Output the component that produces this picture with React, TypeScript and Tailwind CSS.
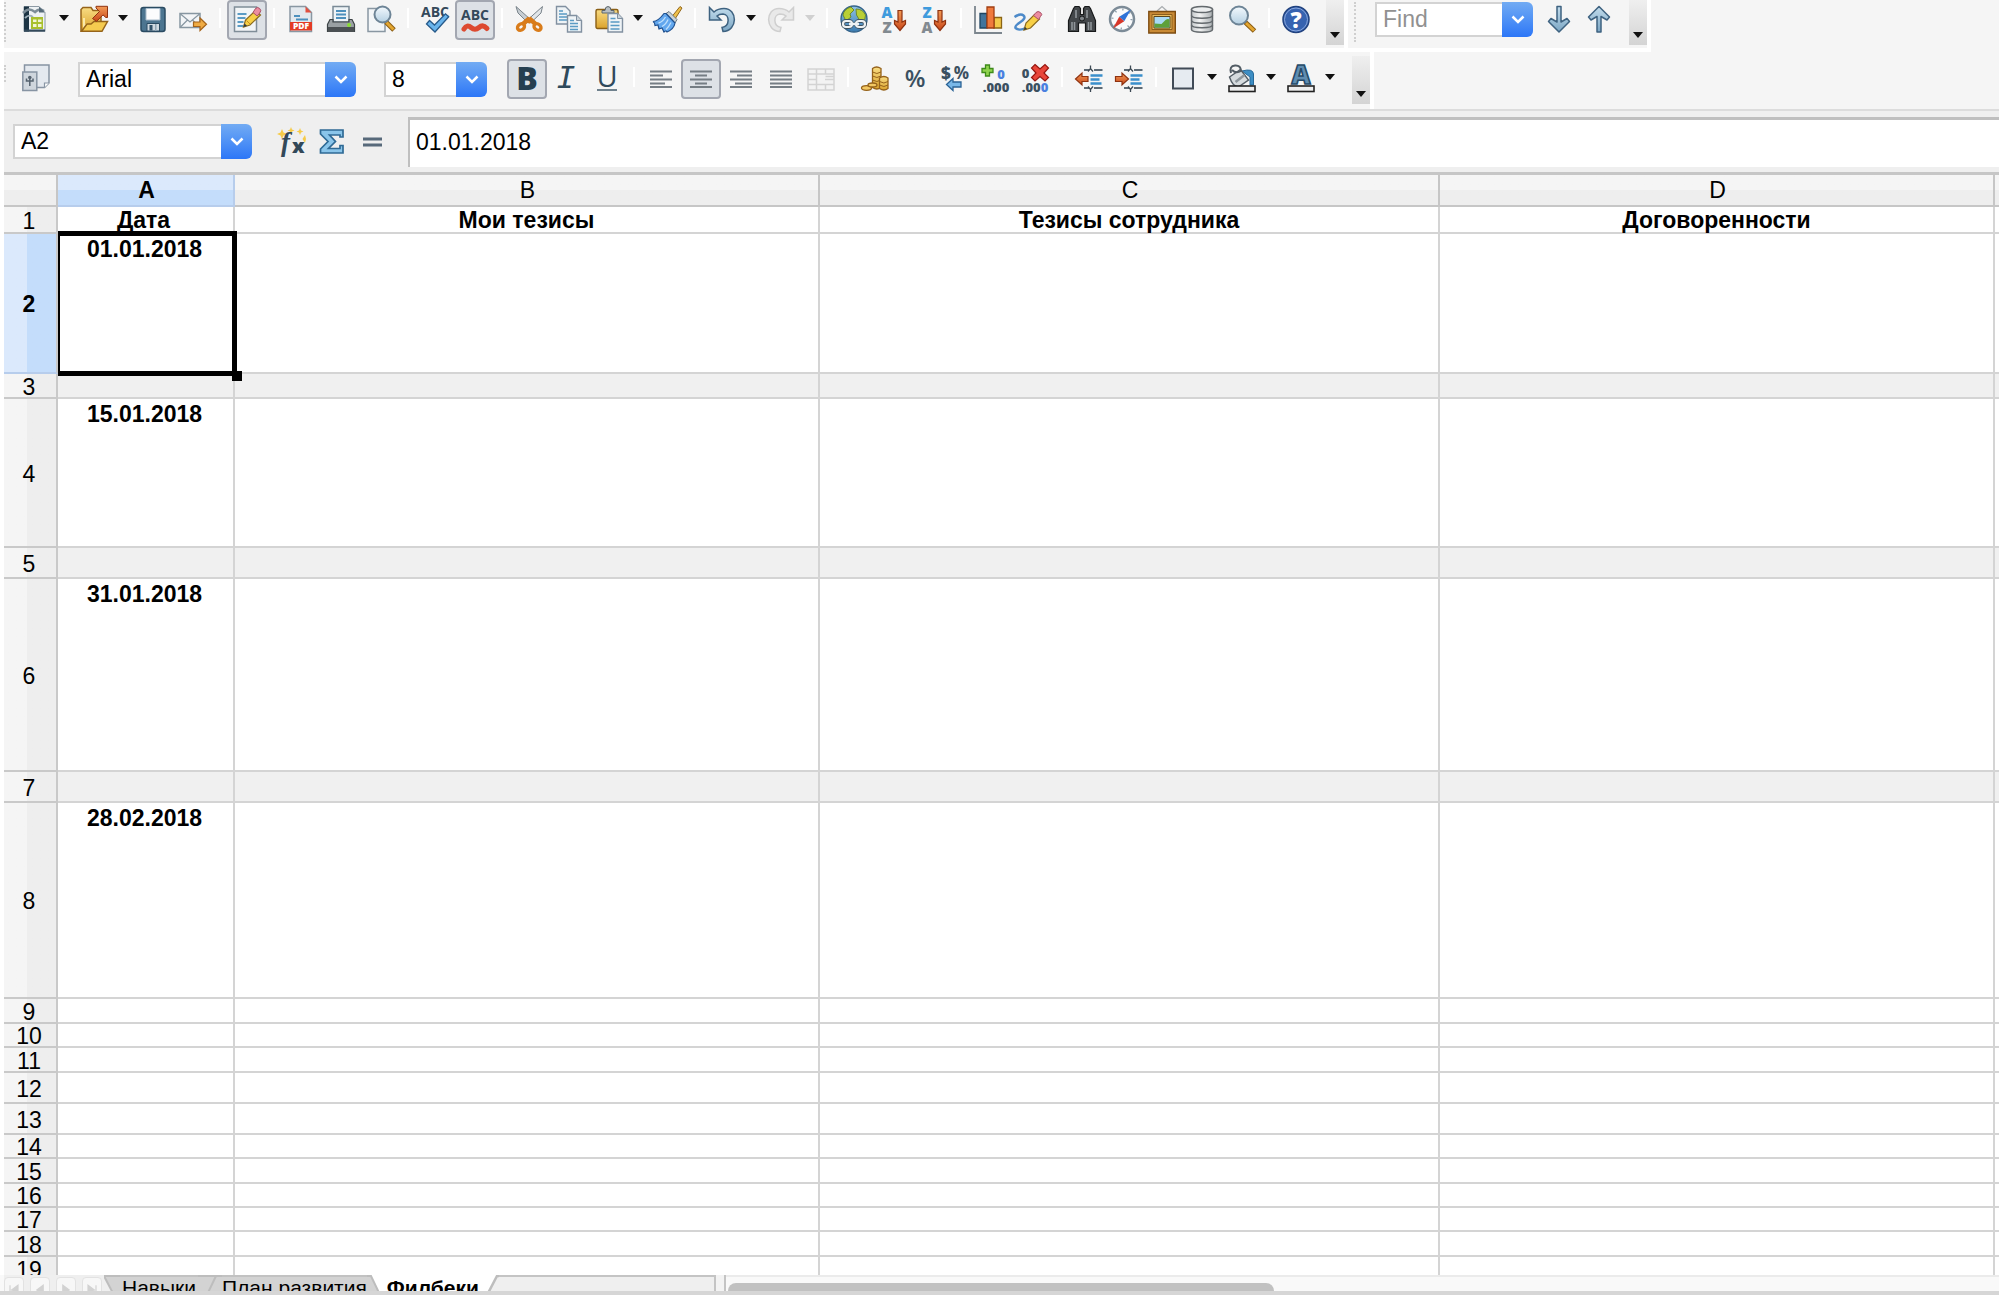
import { useState, type ReactNode } from "react";

const ICONS: Record<string, ReactNode> = {
  new: (
    <>
      <path d="M3 1.500h15l6 6V26.500H3z" fill="#eef2f4" stroke="#8d9aa4" />
      <path d="M3 1.500h5V26.500H3z" fill="#1d3444" />
      <path d="M2 8c5-5 8-4 12-1 3-3 6-3 9-1" fill="none" stroke="#7d8d98" strokeWidth="2.500" />
      <path d="M4 13c3-3 5-3 8-1" fill="none" stroke="#9fb0ba" strokeWidth="2" />
      <path d="M18 1.500v6h6z" fill="#556a78" />
      <path d="M10 12h12v12H10z" fill="#a9c02e" />
      <path d="M12 14.500h3.500V17H12zM17 14.500h3.500V17H17zM12 19h3.500v3H12zM17 19h3.500v3H17z" fill="#f2f6d8" />
      <path d="M3 24.500h21v2H3z" fill="#33495a" />
    </>
  ),
  open: (
    <>
      <path d="M1 26V4.500L3 2.500h8l2 3h8V16L18 26z" fill="url(#gold)" stroke="#96641a" strokeWidth="1.500" />
      <path d="M4 13v10L7 19" fill="none" stroke="#fbe9a8" strokeWidth="2" />
      <path d="M1.500 26.300 7 19h4l3-2.500h13.500L22 26.300z" fill="#f5cb4f" stroke="#96641a" strokeWidth="1.500" />
      <path d="m12.500 13.500 7-7L16 3V1.300h11.500V12.500H25.800l-2.800-2.600-6.500 6.500z" fill="url(#rust)" stroke="#8f3210" />
    </>
  ),
  save: (
    <>
      <rect x="2" y="2.500" width="24" height="24" rx="2.500" fill="#4c7590" stroke="#2a4b62" strokeWidth="1.500" />
      <path d="M7 3.500h14V15H7z" fill="#fbfcfd" stroke="#a9bccb" />
      <path d="M8 18.500h12.500V26H8z" fill="#cfdae2" stroke="#2a4b62" />
      <path d="M10.500 20h3v5.500h-3z" fill="#2f5169" />
      <path d="M16 19h1.500v7H16z" fill="#8fa5b4" />
    </>
  ),
  mail: (
    <>
      <path d="M1 8.500h20v14H1z" fill="#f3f5f7" stroke="#8796a1" strokeWidth="1.500" />
      <path d="m1.500 9 9.500 8 9.500-8M1.500 22l7-7M20.500 22l-7-7" fill="none" stroke="#8796a1" strokeWidth="1.200" />
      <path d="M14.500 17h6.500v-4l6.500 6.300-6.500 6.200v-4h-6.500z" fill="#efab43" stroke="#a4631a" strokeWidth="1.200" />
    </>
  ),
  edit: (
    <>
      <path d="M1.500 2h22v24.500h-22z" fill="#f2f5f7" stroke="#7f8d98" strokeWidth="1.500" />
      <path d="M4.500 13h8M4.500 17h6M4.500 21h6M4.500 9h9" stroke="#5a9bc4" strokeWidth="1.800" />
      <path d="m10.500 22 2-7L22.500 5.500l5 4.500L17 20z" fill="#f7cf45" stroke="#8a6a1e" strokeWidth="1.200" />
      <path d="m13.500 15.500 3.500 3.500" stroke="#c28e22" strokeWidth="1" />
      <path d="m20 7.500 2.500-4q2-2 4.200 0t0 4.500l-2.500 3z" fill="#ec8da0" stroke="#a84f66" />
      <path d="m10.500 22 1-3.500 2.500 2.200z" fill="#2c3a44" />
    </>
  ),
  pdf: (
    <>
      <path d="M3 1.500h15.500l6 6v19H3z" fill="#e3e9ee" stroke="#8997a2" strokeWidth="1.500" />
      <path d="M18.500 1.500v6h6z" fill="#e2503f" />
      <path d="M7 11h6M9 14.500h12" stroke="#4d90bd" strokeWidth="1.800" />
      <path d="M3 17h22v8.500H3z" fill="#e33b24" />
      <text x="14" y="24.300" textAnchor="middle" fontSize="8.500" fontWeight="800" fill="#fff">PDF</text>
    </>
  ),
  print: (
    <>
      <path d="M6 1.500h16V17H6z" fill="#eef3f6" stroke="#7a8a96" strokeWidth="1.500" />
      <path d="M9 6h10M9 9.500h10M9 13h10" stroke="#4d90bd" strokeWidth="1.800" />
      <path d="M3 14.500h3V17h16v-2.500h3l2.500 5v7h-27v-7z" fill="#9aa0a3" stroke="#3d4346" strokeWidth="1.200" />
      <path d="M1 22h26v5H1z" fill="#4b5053" />
      <circle cx="22" cy="20" r="2" fill="#88dd33" />
    </>
  ),
  preview: (
    <>
      <path d="M1 3.500h17v23H1z" fill="#f3f6f8" stroke="#8997a2" strokeWidth="1.500" />
      <path d="m19 17 8 8" stroke="#8a5c12" strokeWidth="5" />
      <path d="m19.500 17.500 7 7" stroke="#e3a631" strokeWidth="3" />
      <circle cx="15.500" cy="9.500" r="8" fill="url(#lens)" stroke="#6d8496" strokeWidth="2" />
    </>
  ),
  spell: (
    <>
      <text x="14" y="11.500" textAnchor="middle" fontSize="14" fontWeight="700" fill="#34495a">ABC</text>
      <path d="m5.500 19 3-3.500 5 4.500L24.500 8.800l3.200 3L14 27z" fill="#69b4ec" stroke="#275a8a" strokeWidth="1.300" />
    </>
  ),
  autospell: (
    <>
      <text x="14" y="14.500" textAnchor="middle" fontSize="14" fontWeight="700" fill="#34495a">ABC</text>
      <path d="M3 24q3-5 7-1.500t8 0 8 1" fill="none" stroke="#dd4a30" strokeWidth="5" strokeLinecap="round" />
    </>
  ),
  cut: (
    <>
      <path d="M1 1.500 3 8l10 10 3-3z" fill="#c7ced3" stroke="#79838a" />
      <path d="M27.500 1.500 26 8 15.500 18l-3-3z" fill="#e2e6e9" stroke="#79838a" />
      <path d="m8 19 5-4.500 3 2.500M20.500 19l-5-4.500-3 2.500" fill="none" stroke="#d97c1a" strokeWidth="4.500" />
      <ellipse cx="6" cy="22" rx="3.800" ry="3" transform="rotate(-40 6 22)" fill="#f5f5f5" stroke="#d97c1a" strokeWidth="3.400" />
      <ellipse cx="22.500" cy="22" rx="3.800" ry="3" transform="rotate(40 22.500 22)" fill="#f5f5f5" stroke="#d97c1a" strokeWidth="3.400" />
    </>
  ),
  copy: (
    <>
      <path d="M1.500 1.500h9l4.500 4.500v13H1.500z" fill="#eef3f6" stroke="#8190a0" strokeWidth="1.400" />
      <path d="M4 6h4M4 9h8M4 12h8M4 15h8" stroke="#5a9bc4" strokeWidth="1.500" />
      <path d="M12.500 10.500h9l5 5V27h-14z" fill="#eef3f6" stroke="#8190a0" strokeWidth="1.400" />
      <path d="M15 15.500h4M15 18.500h8M15 21.500h8M15 24.500h8" stroke="#5a9bc4" strokeWidth="1.500" />
      <path d="M21.500 10.500v5h5" fill="#c9d3da" stroke="#8190a0" />
    </>
  ),
  paste: (
    <>
      <rect x="1" y="4.500" width="22" height="19" rx="1.500" fill="url(#gold)" stroke="#8a5f16" strokeWidth="1.400" />
      <path d="M7 8V5.500h3q0-4 3-4t3 4h3V8z" fill="#b8bfc3" stroke="#5c666c" />
      <path d="M13 8.500h9.500l5 5V27H13z" fill="#eef3f6" stroke="#8190a0" strokeWidth="1.400" />
      <path d="M15.500 13.500h5M15.500 17h9M15.500 20.500h9M15.500 24h9" stroke="#5a9bc4" strokeWidth="1.500" />
      <path d="M22.500 8.500v5h5" fill="#c9d3da" stroke="#8190a0" />
    </>
  ),
  brush: (
    <>
      <path d="m18 11.500 8-10 2 1.500-7 11z" fill="#eec14c" stroke="#93661a" />
      <path d="m12 8.500 3-2 8 8-2 3.500z" fill="#c9d2d8" stroke="#6a7881" />
      <path d="m12 8.500 9 9.500q-1 6-8 9-1-2-3 0l-2-4-3 1-1-4-3 .500q0-3-2-4 5 0 11-8z" fill="#62a7ee" stroke="#1f508f" strokeWidth="1.200" />
      <path d="M11.500 12q-3 5-7 6M14 14.500q-2 5-6 7M17 17.500q-2 4-5 7" fill="none" stroke="#bfe0fb" strokeWidth="1.300" />
    </>
  ),
  undo: (
    <path d="M1.500 2.500 6 7q4-3.500 10-3.500c14 0 14 22.500-1 23l-1-4c8-1 8-13 1-13.500-3 0-4.500.500-6 2l4 4H1.500z" fill="url(#steel)" stroke="#3e6280" strokeWidth="1.500" />
  ),
  redo: (
    <path d="M26.500 2.500 22 7q-4-3.500-10-3.500c-14 0-14 22.500 1 23l1-4C6 21.500 6 9.500 13 9c3 0 4.500.500 6 2l-4 4h11.500z" fill="#e9e9e9" stroke="#cfcfcf" strokeWidth="1.500" />
  ),
  globe: (
    <>
      <circle cx="14" cy="14" r="13" fill="url(#ocean)" stroke="#35648b" strokeWidth="1.400" />
      <path d="M3 10q1-6 8-8l3 3-4 4 1 3-5 4zM16 4q7 0 9.500 6l-1 6-5-1-3-5z" fill="#b9cf35" stroke="#6f8a2a" />
      <rect x="3" y="16" width="9" height="6" rx="3" fill="none" stroke="#3f5361" strokeWidth="4" />
      <rect x="16" y="16" width="9" height="6" rx="3" fill="none" stroke="#3f5361" strokeWidth="4" />
      <rect x="3" y="16" width="9" height="6" rx="3" fill="none" stroke="#eef2f4" strokeWidth="2.200" />
      <rect x="16" y="16" width="9" height="6" rx="3" fill="none" stroke="#eef2f4" strokeWidth="2.200" />
      <path d="M9 19h10" stroke="#eef2f4" strokeWidth="2.400" />
    </>
  ),
  sortAsc: (
    <>
      <text x="7" y="12.500" textAnchor="middle" fontSize="15" fontWeight="800" fill="#3f9bdd">A</text>
      <text x="7" y="28" textAnchor="middle" fontSize="15" fontWeight="800" fill="#828a90">Z</text>
      <path d="M18 5.500h4V17l3.500-1.500V19L20 25.500 14.500 19v-3.500L18 17z" fill="url(#rust)" stroke="#8f3210" strokeWidth="1.200" />
    </>
  ),
  sortDesc: (
    <>
      <text x="7" y="12.500" textAnchor="middle" fontSize="15" fontWeight="800" fill="#3f9bdd">Z</text>
      <text x="7" y="28" textAnchor="middle" fontSize="15" fontWeight="800" fill="#828a90">A</text>
      <path d="M18 5.500h4V17l3.500-1.500V19L20 25.500 14.500 19v-3.500L18 17z" fill="url(#rust)" stroke="#8f3210" strokeWidth="1.200" />
    </>
  ),
  chart: (
    <>
      <path d="M1 1v27h27" fill="none" stroke="#7c868e" strokeWidth="1.800" />
      <path d="M6 8.500h7V23H6z" fill="#41749c" stroke="#1f4562" strokeWidth="1.300" />
      <path d="M20 12.500h7.500V23H20z" fill="#f2c84a" stroke="#8a6414" strokeWidth="1.300" />
      <path d="M13 2h7v21h-7z" fill="#ef7a3d" stroke="#a03e12" strokeWidth="1.300" />
    </>
  ),
  draw: (
    <>
      <path d="M.500 12q6-4 9-1.500t-3 6.500-5 6q4 3.500 11-.500" fill="none" stroke="#4d8ac9" strokeWidth="2.400" />
      <path d="m10 25 2-7L20.500 9.500l5 4.500L16.500 23z" fill="#f7cf45" stroke="#8a6a1e" strokeWidth="1.200" />
      <path d="m19.500 10.500 2.500-3q2-2 4.500 0t0 4L24.500 14.500z" fill="#ec8da0" stroke="#a84f66" />
      <path d="m10 25 1-3 2 1.800z" fill="#2c3a44" />
    </>
  ),
  find: (
    <>
      <path d="M5.500 3.500 7 1.500h4l1.500 2v6h3v-6l1.500-2h4l1.500 2 5 12v11h-10V18h-7v8.500h-10v-11z" fill="#43474a" stroke="#17191a" strokeWidth="1.200" />
      <path d="M4 17v8M6.500 17v8M20.500 17v8M23 17v8M8 5v8M19 5v8" stroke="#8f9599" strokeWidth="1.600" />
      <circle cx="14" cy="13.500" r="2.500" fill="#7d8387" stroke="#17191a" />
    </>
  ),
  navigator: (
    <>
      <circle cx="14" cy="14" r="12" fill="#fafbfc" stroke="#7c8b97" strokeWidth="2.500" />
      <circle cx="14" cy="14" r="9.500" fill="none" stroke="#8fa0ac" strokeWidth="2" strokeDasharray="1.300 6.160" />
      <path d="m23 4.500-6.800 11.800-5-4.600z" fill="#2e73d8" />
      <path d="m5 23.500 6.200-11.800 5 4.600z" fill="#d8372a" />
    </>
  ),
  gallery: (
    <>
      <path d="m9 6 5-4.500L19 6" fill="none" stroke="#a9adb0" strokeWidth="1.300" />
      <path d="M.800 6.500h26.500V28H.800z" fill="#c98a35" stroke="#7d4c11" strokeWidth="1.400" />
      <path d="M4 9.500h20v15H4z" fill="#e9bb5d" stroke="#8a5c1b" />
      <path d="M6 11.500h16V23H6z" fill="#a8daf5" stroke="#5a451b" />
      <path d="m6.500 22.500v-4l7 .500 4-4q3-2 4 0v7.500z" fill="#5da03a" />
    </>
  ),
  database: (
    <>
      <path d="M3.500 4.500v20c0 3.500 21 3.500 21 0v-20z" fill="url(#metal)" stroke="#63696d" strokeWidth="1.500" />
      <path d="M3.500 10.500c0 3.500 21 3.500 21 0M3.500 15.500c0 3.500 21 3.500 21 0M3.500 20c0 3.500 21 3.500 21 0" fill="none" stroke="#63696d" strokeWidth="1.500" />
      <ellipse cx="14" cy="4.500" rx="10.500" ry="3" fill="#eceeef" stroke="#63696d" strokeWidth="1.500" />
    </>
  ),
  zoom: (
    <>
      <path d="m17 17 9.500 9" stroke="#8a5c12" strokeWidth="5" />
      <path d="m18 18 8 7.500" stroke="#e3a631" strokeWidth="3" />
      <circle cx="11" cy="10.500" r="9" fill="url(#lens)" stroke="#6d8496" strokeWidth="2" />
    </>
  ),
  help: (
    <>
      <circle cx="14" cy="14.500" r="13" fill="#3763b0" stroke="#21427f" strokeWidth="1.500" />
      <circle cx="14" cy="14.500" r="11.500" fill="none" stroke="#88a6dc" strokeWidth="1" />
      <text x="14" y="22.500" textAnchor="middle" fontSize="22" fontWeight="800" fill="#fff">?</text>
    </>
  ),
  down: (
    <path d="M12 1.500h4V17l6-3.500 2.500 3L14 27 3.500 16.500l2.500-3 6 3.500z" fill="url(#steel)" stroke="#3e6280" strokeWidth="1.500" strokeLinejoin="round" />
  ),
  up: (
    <path d="M12 27h4V11.500l6 3.500 2.500-3L14 1.500 3.500 12l2.500 3 6-3.500z" fill="url(#steel)" stroke="#3e6280" strokeWidth="1.500" strokeLinejoin="round" />
  ),
  styles: (
    <>
      <path d="M2.500 1h24.500v18l-4.500 4.500h-20z" fill="#e4e9ef" stroke="#8794a3" strokeWidth="1.500" />
      <path d="M22.500 23.500V19H27" fill="#fff" stroke="#8794a3" strokeWidth="1.200" />
      <path d="M.800 8h14v18.500H.800z" fill="#cfd6dd" stroke="#8794a3" strokeWidth="1.500" />
      <path d="M7.800 13v9M4.500 14.500v2.500h6.500v-2.500" fill="none" stroke="#56636f" strokeWidth="1.500" />
      <circle cx="7.800" cy="13.500" r="1.800" fill="#56636f" />
    </>
  ),
  bold: <text x="14" y="25.500" textAnchor="middle" fontSize="32" fontWeight="800" fill="#263f50">B</text>,
  italic: <text x="13" y="24" textAnchor="middle" fontSize="31" fontStyle="italic" fontWeight="500" fill="#2f4a5c" className="font-['DejaVu_Sans_Mono']">I</text>,
  underline: (
    <>
      <text x="14" y="23" textAnchor="middle" fontSize="29" fontWeight="500" fill="#2f4a5c">U</text>
      <path d="M4 26h20" stroke="#4e6474" strokeWidth="1.600" />
    </>
  ),
  left: <path d="M3 7.500h22M3 11.500h13M3 15.500h22M3 19.500h15M3 23h22" stroke="#757d84" strokeWidth="2.200" />,
  center: <path d="M3 7.500h22M8 11.500h12M3 15.500h22M8 19.500h12M3 23h22" stroke="#757d84" strokeWidth="2.200" />,
  right: <path d="M3 7.500h22M10 11.500h15M3 15.500h22M8 19.500h17M3 23h22" stroke="#757d84" strokeWidth="2.200" />,
  justify: <path d="M3 7.500h22M3 11.500h22M3 15.500h22M3 19.500h22M3 23h22" stroke="#757d84" strokeWidth="2.200" />,
  merge: (
    <path d="M1 5h26v21H1zM1 10h26M1 15.500h8M18 15.500h9M1 20.500h26M9.500 5v21M18.500 5v5M18.500 20.500V26M18.500 12.500H27" fill="#f3f3f3" stroke="#d3d3d3" strokeWidth="1.500" />
  ),
  currency: (
    <>
      <path d="M11.500 4.500v19q4.500 3 8.500 0v-19q-4.500-3-8.500 0z" fill="url(#gold)" stroke="#95621a" strokeWidth="1.300" />
      <path d="M11.500 8q4.500 3 8.500 0M11.500 12q4.500 3 8.500 0M11.500 16q4.500 3 8.500 0" fill="none" stroke="#95621a" />
      <path d="M18.500 14v10.500q4.500 3 8.500 0V14q-4-3-8.500 0z" fill="url(#gold)" stroke="#95621a" strokeWidth="1.300" />
      <path d="M18.500 17.500q4.500 3 8.500 0M18.500 21q4.500 3 8.500 0" fill="none" stroke="#95621a" />
      <ellipse cx="5.500" cy="24" rx="5" ry="2.300" fill="#f3c863" stroke="#95621a" strokeWidth="1.300" />
      <ellipse cx="11.500" cy="21" rx="4.500" ry="2" fill="#f3c863" stroke="#95621a" strokeWidth="1.300" />
    </>
  ),
  percent: <text x="14" y="23" textAnchor="middle" fontSize="24" fontWeight="600" fill="#3b5060">%</text>,
  standard: (
    <>
      <text x="5" y="14.500" textAnchor="middle" fontSize="17" fontWeight="800" fill="#3b5060">$</text>
      <text x="20.500" y="14.500" textAnchor="middle" fontSize="17" fontWeight="700" fill="#3b5060">%</text>
      <path d="m5.500 20.500 6.500-6v3.500h8v5h-8v3.500z" fill="#79b8e8" stroke="#2b6395" strokeWidth="1.300" />
    </>
  ),
  addDecimal: (
    <>
      <path d="M4.500 1h4v3.500H12v4H8.500V12h-4V8.500H1v-4h3.500z" fill="#8fd34d" stroke="#3e8a1a" strokeWidth="1.300" />
      <text x="20" y="15" textAnchor="middle" fontSize="13" fontWeight="800" fill="#4a80e0">0</text>
      <text x="15" y="27.500" textAnchor="middle" fontSize="13" fontWeight="800" fill="#3b5060">.000</text>
    </>
  ),
  deleteDecimal: (
    <>
      <text x="4.500" y="13.500" textAnchor="middle" fontSize="13" fontWeight="800" fill="#3b5060">0</text>
      <text x="14" y="27.500" textAnchor="middle" fontSize="13" fontWeight="800" fill="#3b5060">
        .00<tspan fill="#4a80e0">0</tspan>
      </text>
      <path d="m14 .500 5 4.500 5-4.500 3.500 3.500L23 9l4.500 4.500L24 17l-5-4.500L14 17l-3.500-3.500L15 9l-4.500-5z" fill="#e9463a" stroke="#96160f" strokeWidth="1.200" />
    </>
  ),
  outdent: (
    <>
      <path d="M9 6h5M19 6h8.500M9 24h5M19 24h8.500" stroke="#5d6b76" strokeWidth="1.800" />
      <path d="m13 7.500 2.500-3 2.500 3M15.500 1.500v3M13 22.500l2.500 3 2.500-3M15.500 25v3" fill="none" stroke="#3b4853" strokeWidth="1.300" />
      <path d="M15.500 11.500h12M15.500 15.500h9M15.500 19.500h11" stroke="#3a8fcb" strokeWidth="2.400" />
      <path d="m.500 15 6.500-6v3.500h6v5H7V21z" fill="url(#rust)" stroke="#8f3210" strokeWidth="1.200" />
    </>
  ),
  indent: (
    <>
      <path d="M9 6h5M19 6h8.500M9 24h5M19 24h8.500" stroke="#5d6b76" strokeWidth="1.800" />
      <path d="m13 7.500 2.500-3 2.500 3M15.500 1.500v3M13 22.500l2.500 3 2.500-3M15.500 25v3" fill="none" stroke="#3b4853" strokeWidth="1.300" />
      <path d="M15.500 11.500h12M15.500 15.500h9M15.500 19.500h11" stroke="#3a8fcb" strokeWidth="2.400" />
      <path d="M13.500 15 7 9v3.500H.500v5H7V21z" fill="url(#rust)" stroke="#8f3210" strokeWidth="1.200" />
    </>
  ),
  borders: <rect x="4" y="4.500" width="20" height="20" fill="#e6ebf1" stroke="#414b57" strokeWidth="2" />,
  fill: (
    <>
      <path d="M14 7q11-3 11.500 3v11h-3.500V13z" fill="#3d8ec4" stroke="#286a99" />
      <path d="m1.500 13 11-7.500L20.500 16 11 22.500q-6 1-9.500-9.500z" fill="#d6dbde" stroke="#525c64" strokeWidth="1.400" />
      <path d="M3 9Q1 2 7 1.500t6 6M4 6q4 4 9 1" fill="none" stroke="#525c64" strokeWidth="2" />
      <path d="m7.500 18 9-7" stroke="#8e979d" strokeWidth="2.500" />
      <rect x="1" y="22" width="26" height="5.500" fill="#eee" stroke="#222" strokeWidth="1.600" />
    </>
  ),
  fontColor: (
    <>
      <text x="14" y="19.500" textAnchor="middle" fontSize="26" fontWeight="800" fill="#5f8db1" stroke="#264a68" strokeWidth="1.600">A</text>
      <rect x="1" y="22" width="26" height="5.500" fill="#eee" stroke="#222" strokeWidth="1.600" />
    </>
  ),
  fx: (
    <>
      <path d="m4 2 1.500 3.500L9 7 5.500 8.500 4 12 2.500 8.500-1 7l3.500-1.500zM13 0l1 2.500L16.500 3.500l-2.500 1L13 7l-1-2.500-2.500-1 2.500-1zM22 1l1 2.500L25.500 4.500l-2.500 1L22 8l-1-2.500-2.500-1 2.500-1zM27 8l1 4-1 4-2.500-4z" fill="#f6cb49" />
      <text x="3" y="23.500" fontSize="27" fontStyle="italic" fontWeight="700" fill="#324858" className="font-['Liberation_Serif']">f</text>
      <text x="14" y="25.500" fontSize="20" fontWeight="800" fill="#324858">x</text>
    </>
  ),
  sum: (
    <path d="M2.500 3h22.500v7h-3V8H11.500l6 6.500-7 7H22v-3h3V26H2.500v-4L10 14.500 2.500 7z" fill="#8ac5ea" stroke="#2f6a95" strokeWidth="1.700" />
  ),
  equals: <path d="M5 12h19M5 18h19" stroke="#57697a" strokeWidth="3" />,
};

function Defs() {
  const g: [string, string, string][] = [
    ["gold", "#f8dc83", "#dba32c"],
    ["rust", "#f29a55", "#c9481a"],
    ["lens", "#f3f9fd", "#b5d0e3"],
    ["steel", "#c2dcec", "#7ba6c4"],
    ["ocean", "#8fc3e6", "#3b7bb0"],
  ];
  return (
    <svg className="absolute size-0" aria-hidden="true">
      <defs>
        {g.map(([id, a, b]) => (
          <linearGradient key={id} id={id} x1="0" y1="0" x2="0" y2="1">
            <stop offset="0" stopColor={a} />
            <stop offset="1" stopColor={b} />
          </linearGradient>
        ))}
        <linearGradient id="metal">
          <stop offset="0" stopColor="#c5c9cb" />
          <stop offset="0.400" stopColor="#f2f3f3" />
          <stop offset="1" stopColor="#a9aeb1" />
        </linearGradient>
      </defs>
    </svg>
  );
}

function Icon({ name }: { name: string }) {
  return (
    <svg viewBox="0 0 28 28" className="size-7 shrink-0 overflow-visible font-['Open_Sans',sans-serif]" aria-hidden="true">
      {ICONS[name]}
    </svg>
  );
}

function Tool({ name, label, on = false }: { name: string; label: string; on?: boolean }) {
  return (
    <button
      type="button"
      aria-label={label}
      aria-pressed={on}
      className={
        on
          ? "flex h-10 w-10 shrink-0 items-center justify-center rounded border-2 border-[#a3a7b1] bg-[#dde1e6] pb-0.5"
          : "flex h-10 w-10 shrink-0 items-center justify-center pb-0.5"
      }
    >
      <Icon name={name} />
    </button>
  );
}

function Triangle({ faded = false }: { faded?: boolean }) {
  return (
    <svg viewBox="0 0 10 6" className="h-1.5 w-2.5" aria-hidden="true">
      <path d="M0 0h10L5 6z" fill={faded ? "#d0d0d0" : "#111"} />
    </svg>
  );
}

function More({ label, faded = false }: { label: string; faded?: boolean }) {
  return (
    <button type="button" aria-label={label} className="flex h-10 w-[19px] shrink-0 items-center justify-center pr-0.5 pb-1">
      <Triangle faded={faded} />
    </button>
  );
}

function Sep() {
  return (
    <span className="flex h-10 w-3.5 shrink-0 items-center justify-center">
      <span className="mb-1 h-5 w-0.5 bg-white" />
    </span>
  );
}

function Grip() {
  return <span className="my-0.5 h-10 w-0 shrink-0 border-l-2 border-dotted border-[#cfcfcf]" />;
}

function Overflow({ label }: { label: string }) {
  return (
    <button
      type="button"
      aria-label={label}
      className="flex w-[18px] shrink-0 items-end justify-center self-stretch bg-linear-to-b from-[#efefef] to-[#d4d4d4] pb-[7px]"
    >
      <Triangle />
    </button>
  );
}

function Combo({ label, value, placeholder, className }: { label: string; value?: string; placeholder?: string; className: string }) {
  const [text, setText] = useState(value ?? "");
  return (
    <div className={className}>
      <input
        aria-label={label}
        value={text}
        placeholder={placeholder}
        onChange={(e) => setText(e.target.value)}
        className="h-[35px] min-w-0 flex-1 border-2 border-r-0 border-[#d3d3d3] bg-white pl-1.5 text-[23px] leading-7 outline-none placeholder:text-[#919191]"
      />
      <button
        type="button"
        aria-label={label + " list"}
        className="flex h-[35px] w-[31px] shrink-0 items-center justify-center rounded-r-md bg-linear-to-b from-[#72abf3] to-[#2c76f7]"
      >
        <svg viewBox="0 0 14 9" className="h-[9px] w-3.5" aria-hidden="true">
          <path d="m1.500 1.500 5.500 5.500 5.500-5.500" fill="none" stroke="#fff" strokeWidth="2.500" />
        </svg>
      </button>
    </div>
  );
}

const ROWS: { h: string; date?: string; shaded?: boolean }[] = [
  { h: "h-[140px]", date: "01.01.2018" },
  { h: "h-[25px]", shaded: true },
  { h: "h-[149px]", date: "15.01.2018" },
  { h: "h-[31px]", shaded: true },
  { h: "h-[193px]", date: "31.01.2018" },
  { h: "h-[31px]", shaded: true },
  { h: "h-[196px]", date: "28.02.2018" },
  { h: "h-[25px]" },
  { h: "h-[24px]" },
  { h: "h-[25px]" },
  { h: "h-[31px]" },
  { h: "h-[31px]" },
  { h: "h-[24px]" },
  { h: "h-[25px]" },
  { h: "h-[24px]" },
  { h: "h-[24px]" },
  { h: "h-[25px]" },
  { h: "h-[25px]" },
];

const CELL = "border-r-2 border-b-2 border-[#d4d4d4] p-0 align-top";
const TITLE_CELL = "border-r-2 border-b-2 border-[#d4d4d4] p-0 pt-0.5 align-top";
const EDGE_CELL = "border-b-2 border-[#d4d4d4] p-0";
const ROW_HEAD =
  "border-r-2 border-b-2 border-[#c9c9c9] bg-linear-to-r from-[#f5f5f5] from-45% to-[#eee] to-45% p-0 pt-0.5 pr-0.5 align-middle font-normal leading-5";
const COL_HEAD =
  "border-r-2 border-b-2 border-[#c6c6c6] bg-linear-to-b from-[#f5f5f5] from-50% to-[#eee] to-50% p-0 pl-0.5 align-middle font-normal";

function Sheet() {
  return (
    <table className="w-full table-fixed border-separate border-spacing-0 text-center text-[23px] leading-[22px]">
      <colgroup>
        <col className="w-[54px]" />
        <col className="w-[177px]" />
        <col className="w-[585px]" />
        <col className="w-[620px]" />
        <col />
        <col className="w-1" />
      </colgroup>
      <thead>
        <tr className="h-8">
          <th className={COL_HEAD} />
          <th className="border-r-2 border-b-2 border-[#b7cdec] bg-linear-to-b from-[#dbe9fc] from-50% to-[#c4ddfb] to-50% p-0 pl-0.5 align-middle font-bold">
            A
          </th>
          <th className={COL_HEAD}>B</th>
          <th className={COL_HEAD}>C</th>
          <th className={COL_HEAD}>D</th>
          <th className="border-b-2 border-[#c6c6c6] bg-linear-to-b from-[#f5f5f5] from-50% to-[#eee] to-50% p-0" />
        </tr>
      </thead>
      <tbody>
        <tr className="h-[27px] font-bold">
          <th className={ROW_HEAD}>1</th>
          <td className={TITLE_CELL + " pr-1"}>Дата</td>
          <td className={TITLE_CELL}>Мои тезисы</td>
          <td className={TITLE_CELL}>Тезисы сотрудника</td>
          <td className={TITLE_CELL}>Договоренности</td>
          <td className={EDGE_CELL} />
        </tr>
        {ROWS.map((row, i) => (
          <tr key={i} className={row.shaded ? row.h + " bg-[#f0f0f0]" : row.h}>
            {i === 0 ? (
              <th className="border-r-2 border-b-2 border-r-[#c9c9c9] border-b-[#b7cdec] bg-linear-to-r from-[#dbe9fc] from-45% to-[#c4ddfb] to-45% p-0 pt-0.5 pr-0.5 align-middle font-bold">
                2
              </th>
            ) : (
              <th className={ROW_HEAD}>{i + 2}</th>
            )}
            <td className={i === 0 ? CELL + " relative" : CELL}>
              {row.date && <div className="pt-1 pr-0.5 font-bold">{row.date}</div>}
              {i === 0 && (
                <>
                  <span className="absolute -top-[3px] -right-1 -bottom-1 left-0 border-[5px] border-l-2 border-black" />
                  <span className="absolute -right-[9px] -bottom-[9px] size-2.5 bg-black" />
                </>
              )}
            </td>
            <td className={CELL} />
            <td className={CELL} />
            <td className={CELL} />
            <td className={EDGE_CELL} />
          </tr>
        ))}
      </tbody>
    </table>
  );
}

const NAV = [
  ["First sheet", "M5 2v12M15 2v12L7 8z"],
  ["Previous sheet", "M14 2v12L6 8z"],
  ["Next sheet", "M6 2v12l8-6z"],
  ["Last sheet", "M15 2v12M5 2v12l8-6z"],
];

function Footer() {
  return (
    <footer className="flex h-4 shrink-0 overflow-hidden bg-[#f9f9f9] pl-1">
      <nav aria-label="Sheets" className="flex h-6 shrink-0 bg-[#efefef] text-[21px] leading-6">
        <div className="flex w-[100px] gap-1.5 pt-0.5">
          {NAV.map(([label, d]) => (
            <button key={label} type="button" aria-label={label} className="flex h-6 w-5 justify-center rounded border border-[#e2e2e2] bg-[#f7f7f7] pt-1">
              <svg viewBox="0 0 20 16" className="h-4 w-4" aria-hidden="true">
                <path d={d} fill="#d2d2d2" stroke="#d2d2d2" strokeWidth="1.500" />
              </svg>
            </button>
          ))}
        </div>
        <svg viewBox="0 0 16 24" className="h-6 w-4 shrink-0" aria-hidden="true">
          <path d="M0 1h16v23H12z" fill="#d3d3d3" />
          <path d="m0 1 12 23M0 1h16" fill="none" stroke="#bdbdbd" strokeWidth="2" />
        </svg>
        <button type="button" className="border-t-2 border-[#c2c2c2] bg-[#d3d3d3] px-0.5 leading-[22px]">Навыки</button>
        <svg viewBox="0 0 24 24" className="h-6 w-6 shrink-0" aria-hidden="true">
          <path d="M0 0h24v24H0z" fill="#d3d3d3" />
          <path d="M0 1h24M18 1 7 24" fill="none" stroke="#bdbdbd" strokeWidth="2" />
        </svg>
        <button type="button" className="border-t-2 border-[#c2c2c2] bg-[#d3d3d3] leading-[22px]">План развития</button>
        <svg viewBox="0 0 20 24" className="h-6 w-5 shrink-0" aria-hidden="true">
          <path d="M0 0h20v24H0z" fill="#fff" />
          <path d="M0 1h4l11 23H0z" fill="#d3d3d3" />
          <path d="M0 1h4l11 23" fill="none" stroke="#bdbdbd" strokeWidth="2" />
        </svg>
        <button type="button" aria-current="page" className="bg-white pt-px font-bold">Филбеки</button>
        <svg viewBox="0 0 20 24" className="h-6 w-5 shrink-0" aria-hidden="true">
          <path d="M0 0h18L6 24H0z" fill="#fff" />
          <path d="M20 1h-2L6 24" fill="none" stroke="#bdbdbd" strokeWidth="2.500" />
        </svg>
        <span className="w-[217px] border-t-2 border-r-2 border-[#c4c4c4]" />
        <span className="w-2.5 border-r-2 border-[#c4c4c4] bg-[#f3f3f3]" />
      </nav>
      <div className="min-w-0 flex-1 border-t-2 border-[#ebebeb] pt-1.5 pl-0.5">
        <div className="h-4 w-[43%] rounded-t-lg bg-[#c1c1c1]" />
      </div>
    </footer>
  );
}

export default function App() {
  const [formula, setFormula] = useState("01.01.2018");
  return (
    <div className="flex h-screen flex-col overflow-hidden bg-white font-['Liberation_Sans',Arial,sans-serif] text-black">
      <Defs />
      <header className="ml-1 shrink-0 bg-[#f5f5f5]">
        <div className="flex h-[52px]">
          <div role="toolbar" aria-label="Standard" className="flex items-start border-r-4 border-b-4 border-white pb-[3px]">
            <Grip />
            <div className="ml-[9px] flex pr-2.5">
              <Tool name="new" label="New" />
              <More label="New options" />
              <Tool name="open" label="Open" />
              <More label="Open options" />
              <Tool name="save" label="Save" />
              <Tool name="mail" label="Send by e-mail" />
              <Sep />
              <Tool name="edit" label="Edit file" on />
              <Sep />
              <Tool name="pdf" label="Export as PDF" />
              <Tool name="print" label="Print" />
              <Tool name="preview" label="Page preview" />
              <Sep />
              <Tool name="spell" label="Spelling" />
              <Tool name="autospell" label="Automatic spellcheck" on />
              <Sep />
              <Tool name="cut" label="Cut" />
              <Tool name="copy" label="Copy" />
              <Tool name="paste" label="Paste" />
              <More label="Paste options" />
              <Tool name="brush" label="Format paintbrush" />
              <Sep />
              <Tool name="undo" label="Undo" />
              <More label="Undo steps" />
              <Tool name="redo" label="Redo" />
              <More label="Redo steps" faded />
              <Sep />
              <Tool name="globe" label="Hyperlink" />
              <Tool name="sortAsc" label="Sort ascending" />
              <Tool name="sortDesc" label="Sort descending" />
              <Sep />
              <Tool name="chart" label="Chart" />
              <Tool name="draw" label="Show draw functions" />
              <Sep />
              <Tool name="find" label="Find and replace" />
              <Tool name="navigator" label="Navigator" />
              <Tool name="gallery" label="Gallery" />
              <Tool name="database" label="Data sources" />
              <Tool name="zoom" label="Zoom" />
              <Sep />
              <Tool name="help" label="Help" />
            </div>
            <Overflow label="More standard tools" />
          </div>
          <div role="toolbar" aria-label="Find" className="flex items-start border-r-4 border-b-4 border-white pb-[3px] pl-1.5">
            <Grip />
            <Combo label="Find" placeholder="Find" className="mt-0.5 mr-1.5 ml-[19px] flex w-[158px]" />
            <div className="flex pr-2.5">
              <Tool name="down" label="Find next" />
              <Tool name="up" label="Find previous" />
            </div>
            <Overflow label="More find tools" />
          </div>
        </div>
        <div className="flex h-[57px]">
          <div role="toolbar" aria-label="Formatting" className="flex items-start border-r-4 border-white pt-1 pb-[5px]">
            <div className="mt-1.5">
              <Grip />
            </div>
            <div className="mt-[3px] ml-2.5 flex items-center pr-2">
              <Tool name="styles" label="Styles and formatting" />
              <Combo label="Font name" value="Arial" className="mx-[22px] flex w-[278px]" />
              <Combo label="Font size" value="8" className="mr-5 ml-1.5 flex w-[103px]" />
              <Tool name="bold" label="Bold" on />
              <Tool name="italic" label="Italic" />
              <Tool name="underline" label="Underline" />
              <Sep />
              <Tool name="left" label="Align left" />
              <Tool name="center" label="Align center" on />
              <Tool name="right" label="Align right" />
              <Tool name="justify" label="Justified" />
              <Tool name="merge" label="Merge cells" />
              <Sep />
              <Tool name="currency" label="Currency" />
              <Tool name="percent" label="Percent" />
              <Tool name="standard" label="Standard format" />
              <Tool name="addDecimal" label="Add decimal place" />
              <Tool name="deleteDecimal" label="Delete decimal place" />
              <Sep />
              <Tool name="outdent" label="Decrease indent" />
              <Tool name="indent" label="Increase indent" />
              <Sep />
              <Tool name="borders" label="Borders" />
              <More label="Border options" />
              <Tool name="fill" label="Background color" />
              <More label="Background color options" />
              <Tool name="fontColor" label="Font color" />
              <More label="Font color options" />
            </div>
            <span className="w-1 shrink-0" />
            <Overflow label="More formatting tools" />
          </div>
        </div>
      </header>
      <div className="ml-1 flex h-[66px] shrink-0 items-center border-t-2 border-b-[3px] border-t-[#dcdcdc] border-b-[#c6c6c6] bg-[#efefef]">
        <Combo label="Name box" value="A2" className="ml-[9px] flex w-[239px] shrink-0" />
        <div className="flex pr-4 pl-5">
          <Tool name="fx" label="Function wizard" />
          <Tool name="sum" label="Sum" />
          <Tool name="equals" label="Function" />
        </div>
        <input
          aria-label="Formula"
          value={formula}
          onChange={(e) => setFormula(e.target.value)}
          className="h-[50px] min-w-0 flex-1 border-t-[3px] border-l-2 border-[#bfbfbf] bg-white pb-0.5 pl-1.5 text-[23px] outline-none"
        />
      </div>
      <main className="ml-1 min-h-0 flex-1 overflow-hidden">
        <Sheet />
      </main>
      <Footer />
      <div className="h-1 shrink-0 bg-[#d6d6d6]" />
    </div>
  );
}
